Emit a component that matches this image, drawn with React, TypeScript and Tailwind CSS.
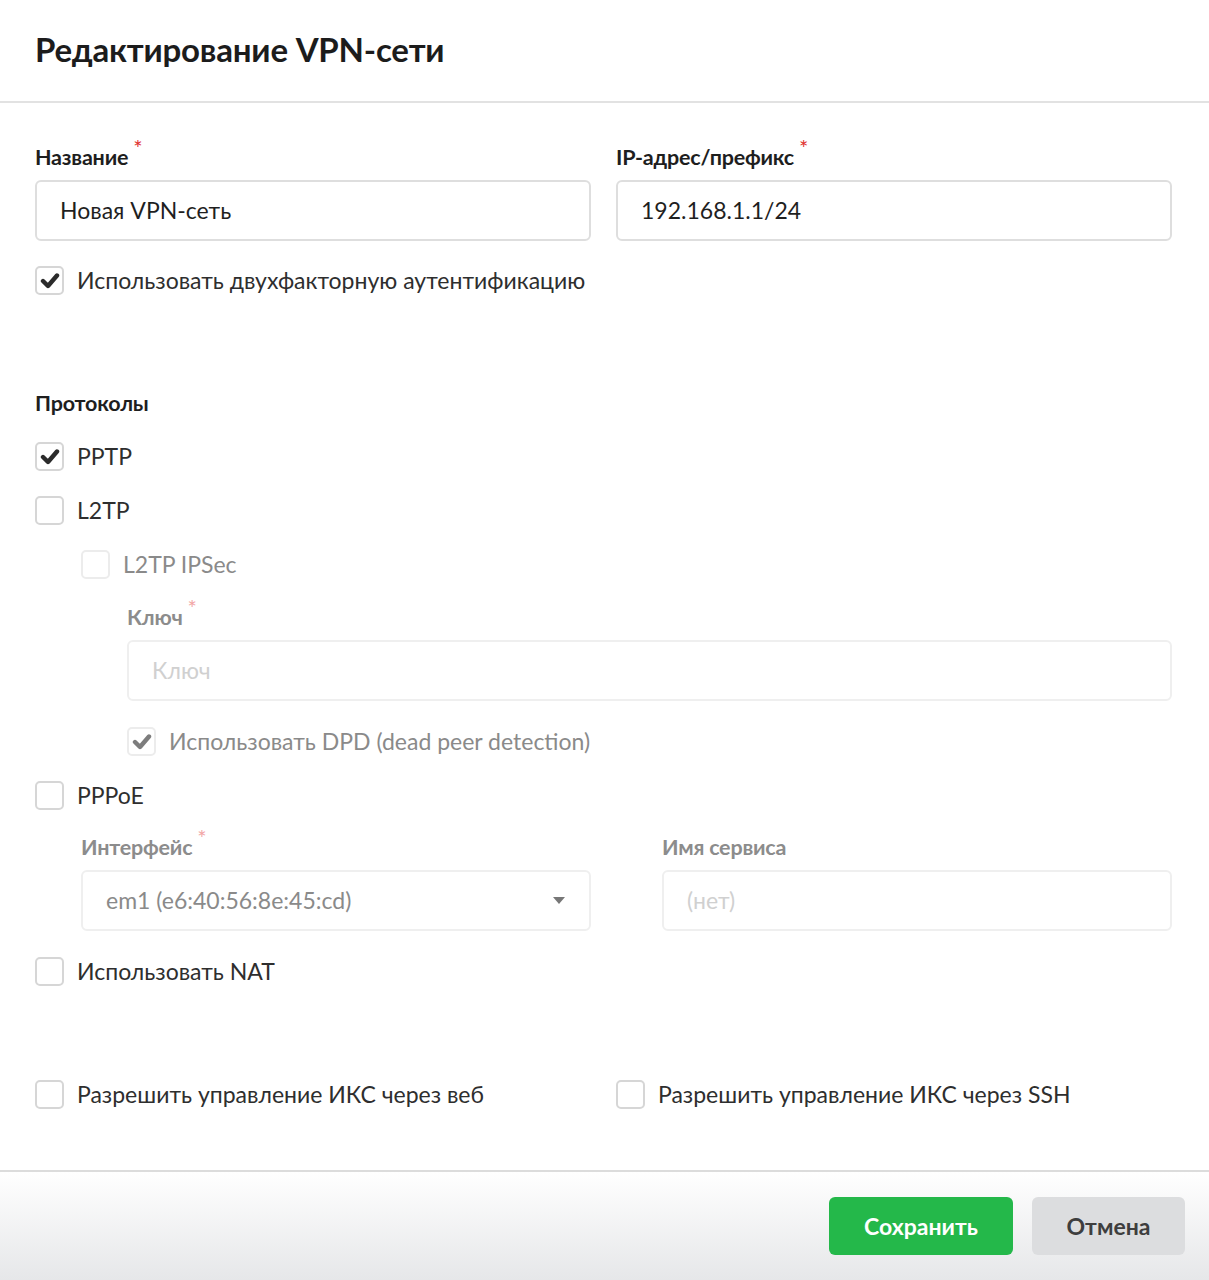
const font = { fontFamily: "Lato, 'Open Sans', sans-serif" };

function Tick({ color }: { color: string }) {
  return (
    <svg width="20" height="17" viewBox="0 0 20 17" fill="none">
      <polyline
        points="3,9 8,14 17,3.5"
        stroke={color}
        strokeWidth="4.4"
        strokeLinecap="round"
        strokeLinejoin="round"
      />
    </svg>
  );
}

function Req({ disabled }: { disabled?: boolean }) {
  return (
    <span
      className={`ml-[5px] relative -top-[9px] text-[22px] font-normal ${
        disabled ? "text-[#f2a6a6]" : "text-[#e0302e]"
      }`}
    >
      *
    </span>
  );
}

function Label({
  text,
  required,
  disabled,
}: {
  text: string;
  required?: boolean;
  disabled?: boolean;
}) {
  return (
    <div
      className={`h-[24px] leading-[24px] text-[21.5px] font-bold tracking-[-0.2px] whitespace-nowrap ${
        disabled ? "text-[#8c8c8c]" : "text-[#1e1e1e]"
      }`}
    >
      {text}
      {required && <Req disabled={disabled} />}
    </div>
  );
}

function Check({
  label,
  checked,
  disabled,
}: {
  label: string;
  checked?: boolean;
  disabled?: boolean;
}) {
  return (
    <div className="flex items-center h-[28px]">
      <div
        className={`w-[29px] h-[29px] rounded-[5px] border-2 bg-white flex items-center justify-center shrink-0 ${
          disabled ? "border-[#ececec]" : "border-[#d6d6d6]"
        }`}
      >
        {checked && <Tick color={disabled ? "#7d7d7d" : "#2b2b2b"} />}
      </div>
      <span
        className={`ml-[13px] text-[23px] leading-[28px] whitespace-nowrap ${
          disabled ? "text-[#8a8a8a]" : "text-[#2e2e2e]"
        }`}
      >
        {label}
      </span>
    </div>
  );
}

function Field({
  value,
  placeholder,
  disabled,
  caret,
}: {
  value?: string;
  placeholder?: string;
  disabled?: boolean;
  caret?: boolean;
}) {
  return (
    <div
      className={`h-[61px] rounded-[6px] border-2 bg-white flex items-center pl-[23px] pr-[22px] ${
        disabled ? "border-[#efefef]" : "border-[#dedede]"
      }`}
    >
      <span
        className={`flex-1 text-[23px] ${
          value
            ? disabled
              ? "text-[#8a8a8a]"
              : "text-[#1f1f1f]"
            : "text-[#d0d0d0]"
        }`}
      >
        {value || placeholder}
      </span>
      {caret && (
        <span className="w-0 h-0 border-l-[6px] border-r-[6px] border-t-[7px] border-l-transparent border-r-transparent border-t-[#777] mr-[2px]" />
      )}
    </div>
  );
}

export default function App() {
  return (
    <div className="w-[1209px] h-[1280px] bg-white flex flex-col" style={font}>
      <div className="h-[103px] border-b-2 border-[#e2e2e2] flex items-center pl-[35px] pb-[2px]">
        <h1 className="text-[33px] font-bold text-[#1c1c1c] tracking-[-0.2px]">
          Редактирование VPN-сети
        </h1>
      </div>

      <div className="flex-1 px-[35px] pr-[37px] pt-[42px]">
        <div className="grid grid-cols-2 gap-x-[25px]">
          <div>
            <Label text="Название" required />
            <div className="mt-[11px]">
              <Field value="Новая VPN-сеть" />
            </div>
          </div>
          <div>
            <Label text="IP-адрес/префикс" required />
            <div className="mt-[11px]">
              <Field value="192.168.1.1/24" />
            </div>
          </div>
        </div>

        <div className="mt-[25px]">
          <Check label="Использовать двухфакторную аутентификацию" checked />
        </div>

        <div className="mt-[97px]">
          <Label text="Протоколы" />
        </div>

        <div className="mt-[27px] flex flex-col gap-[26px]">
          <Check label="PPTP" checked />
          <Check label="L2TP" />
          <div className="pl-[46px]">
            <Check label="L2TP IPSec" disabled />
            <div className="pl-[46px] mt-[27px]">
              <Label text="Ключ" required disabled />
              <div className="mt-[11px]">
                <Field placeholder="Ключ" disabled />
              </div>
              <div className="mt-[26px]">
                <Check label="Использовать DPD (dead peer detection)" checked disabled />
              </div>
            </div>
          </div>
          <Check label="PPPoE" />
          <div className="pl-[46px] grid grid-cols-2 gap-x-[71px]">
            <div>
              <Label text="Интерфейс" required disabled />
              <div className="mt-[11px]">
                <Field value="em1 (e6:40:56:8e:45:cd)" disabled caret />
              </div>
            </div>
            <div>
              <Label text="Имя сервиса" disabled />
              <div className="mt-[11px]">
                <Field placeholder="(нет)" disabled />
              </div>
            </div>
          </div>
          <Check label="Использовать NAT" />
        </div>

        <div className="mt-[95px] grid grid-cols-2 gap-x-[25px]">
          <Check label="Разрешить управление ИКС через веб" />
          <Check label="Разрешить управление ИКС через SSH" />
        </div>
      </div>

      <div className="h-[110px] border-t-2 border-[#dcdcdc] bg-gradient-to-b from-white to-[#e6e7e9] flex items-center justify-end gap-[19px] pr-[24px]">
        <button className="h-[58px] w-[184px] rounded-[6px] bg-[#24b84a] text-white text-[23px] font-bold">
          Сохранить
        </button>
        <button className="h-[58px] w-[153px] rounded-[6px] bg-[#dcdddf] text-[#3e3e3e] text-[23px] font-bold">
          Отмена
        </button>
      </div>
    </div>
  );
}
